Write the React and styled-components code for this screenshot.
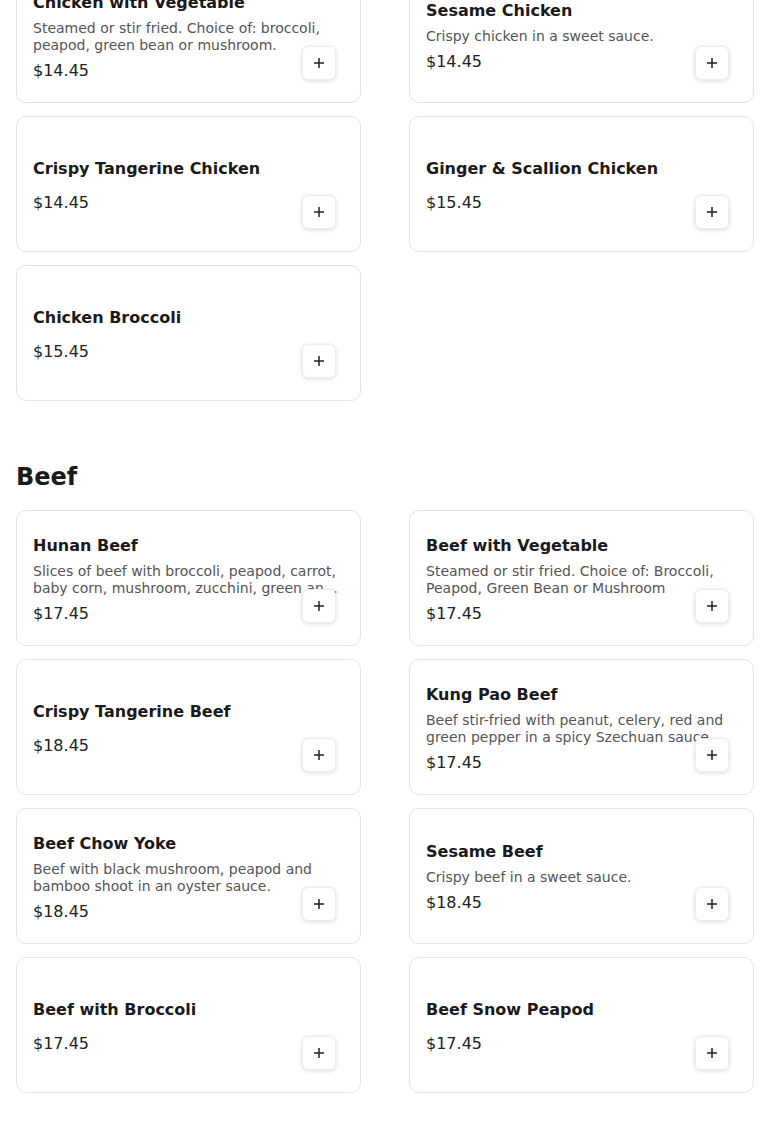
import styled, { createGlobalStyle } from "styled-components";

const GlobalStyle = createGlobalStyle`
  * { box-sizing: border-box; }
  body {
    margin: 0;
    background: #ffffff;
    font-family: "DejaVu Sans", "Liberation Sans", sans-serif;
    color: #1a1a1a;
    overflow: hidden;
  }
`;

const Page = styled.main`
  padding: 0 16px 44px;
  margin-top: -33px;
`;

const Section = styled.section`
  & + & {
    margin-top: 62px;
  }
`;

const SectionTitle = styled.h2`
  margin: 0 0 18px;
  font-size: 24px;
  line-height: 29px;
  font-weight: bold;
  color: #1a1a1a;
`;

const Grid = styled.div`
  display: grid;
  grid-template-columns: 1fr 1fr;
  column-gap: 48px;
  row-gap: 13px;
`;

const Card = styled.article`
  position: relative;
  height: 136px;
  padding: 3px 16px 0;
  border: 1px solid #e4e4e4;
  border-radius: 10px;
  background: #fff;
  display: flex;
  flex-direction: column;
  justify-content: center;
`;

const Name = styled.h3`
  margin: 0 0 7px;
  font-size: 16px;
  line-height: 20px;
  font-weight: bold;
  color: #1a1a1a;
`;

const Desc = styled.p`
  margin: 0 0 7px;
  font-size: 14px;
  line-height: 17px;
  color: #555;
  display: -webkit-box;
  -webkit-line-clamp: 2;
  -webkit-box-orient: vertical;
  overflow: hidden;
`;

const Price = styled.div`
  font-size: 16px;
  line-height: 20px;
  color: #222;
`;

const AddButton = styled.button`
  position: absolute;
  right: 24px;
  bottom: 22px;
  width: 34px;
  height: 34px;
  padding: 0;
  border: 1px solid #ececec;
  border-radius: 6px;
  background: #fff;
  box-shadow: 0 1px 4px rgba(0, 0, 0, 0.14);
  display: flex;
  align-items: center;
  justify-content: center;
  color: #222;
  cursor: pointer;
`;

const PlusIcon = () => (
  <svg width="12" height="12" viewBox="0 0 12 12" fill="none">
    <path d="M6 1v10M1 6h10" stroke="currentColor" strokeWidth="1.5" />
  </svg>
);

const chicken = [
  { name: "Chicken with Vegetable", desc: "Steamed or stir fried. Choice of: broccoli, peapod, green bean or mushroom.", price: "$14.45" },
  { name: "Sesame Chicken", desc: "Crispy chicken in a sweet sauce.", price: "$14.45" },
  { name: "Crispy Tangerine Chicken", desc: "", price: "$14.45" },
  { name: "Ginger & Scallion Chicken", desc: "", price: "$15.45" },
  { name: "Chicken Broccoli", desc: "", price: "$15.45" },
];

const beef = [
  { name: "Hunan Beef", desc: "Slices of beef with broccoli, peapod, carrot, baby corn, mushroom, zucchini, green and red pepper in a spicy sauce.", price: "$17.45" },
  { name: "Beef with Vegetable", desc: "Steamed or stir fried. Choice of: Broccoli, Peapod, Green Bean or Mushroom", price: "$17.45" },
  { name: "Crispy Tangerine Beef", desc: "", price: "$18.45" },
  { name: "Kung Pao Beef", desc: "Beef stir-fried with peanut, celery, red and green pepper in a spicy Szechuan sauce.", price: "$17.45" },
  { name: "Beef Chow Yoke", desc: "Beef with black mushroom, peapod and bamboo shoot in an oyster sauce.", price: "$18.45" },
  { name: "Sesame Beef", desc: "Crispy beef in a sweet sauce.", price: "$18.45" },
  { name: "Beef with Broccoli", desc: "", price: "$17.45" },
  { name: "Beef Snow Peapod", desc: "", price: "$17.45" },
];

const MenuItem = ({ item }) => (
  <Card>
    <Name>{item.name}</Name>
    <Desc>{item.desc}</Desc>
    <Price>{item.price}</Price>
    <AddButton aria-label={`Add ${item.name}`}>
      <PlusIcon />
    </AddButton>
  </Card>
);

export default function App() {
  return (
    <>
      <GlobalStyle />
      <Page>
        <Section>
          <Grid>
            {chicken.map((item) => (
              <MenuItem key={item.name} item={item} />
            ))}
          </Grid>
        </Section>
        <Section>
          <SectionTitle>Beef</SectionTitle>
          <Grid>
            {beef.map((item) => (
              <MenuItem key={item.name} item={item} />
            ))}
          </Grid>
        </Section>
      </Page>
    </>
  );
}
